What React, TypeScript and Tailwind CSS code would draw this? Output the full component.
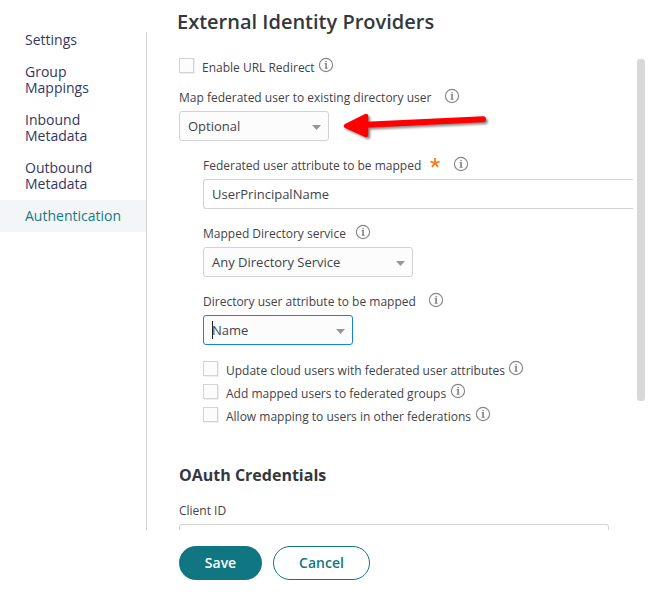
import React from "react";

function Info({ className = "" }: { className?: string }) {
  return (
    <svg className={`shrink-0 overflow-visible ${className}`} width="14" height="14" viewBox="0 0 14 14" fill="none">
      <circle cx="7" cy="7" r="6.6" stroke="#868686" strokeWidth="1.15" />
      <path d="M5.6 5.6H7.1V10.2M5.6 10.3H8.7" stroke="#8c8c8c" strokeWidth="1.1" />
      <path d="M7.1 5.1V10.6" stroke="#8c8c8c" strokeWidth="1.5" />
      <rect x="6.3" y="2.9" width="1.6" height="1.3" fill="#8c8c8c" />
    </svg>
  );
}

function Label({ text, required, gap }: { text: string; required?: boolean; gap: string }) {
  return (
    <div className="flex h-[27px] items-center whitespace-nowrap text-[12px]">
      <span>{text}</span>
      {required && (
        <svg className="-mt-1.5 ml-[9px] overflow-visible" width="10" height="10" viewBox="0 0 10 10" stroke="#fb7a1c" strokeWidth="1.8">
          <path d="M5 4.8V0M5 4.8L.4 3.6M5 4.8L9.6 3.6M5 4.8L2 9M5 4.8L8 9" />
        </svg>
      )}
      <Info className={`-mt-[3px] ${gap}`} />
    </div>
  );
}

function Select({ value, width, focused }: { value: string; width: string; focused?: boolean }) {
  return (
    <div
      className={`flex h-[30px] items-center justify-between rounded-[3px] border bg-[#fcfcfc] pl-2 pr-[7px] text-[13px] ${width} ${focused ? "border-[#1683d8]" : "border-[#d2d2d2]"}`}
    >
      <span className="relative pt-0.5">
        {focused && <span className="absolute top-0.5 left-0 h-[18px] w-px bg-[#222]" />}
        {value}
      </span>
      <svg className="mt-[3px]" width="9" height="5" viewBox="0 0 9 5">
        <path d="M0 0H9L4.5 5Z" fill="#969696" />
      </svg>
    </div>
  );
}

function Check({ text, gap = "ml-[4px]" }: { text: string; gap?: string }) {
  return (
    <div className="flex h-[23px] items-center whitespace-nowrap text-[12px]">
      <span className="-mt-[3px] mr-2 size-[15px] shrink-0 border border-[#d4d4d4] bg-[#fcfcfc] shadow-[1px_1px_0_#eeeeee]" />
      <span className="pt-0.5">{text}</span>
      <Info className={`-mt-[3px] ${gap}`} />
    </div>
  );
}

const navItems = ["Settings", "Group Mappings", "Inbound Metadata", "Outbound Metadata", "Authentication"];

export default function App() {
  return (
    <div className="flex h-[597px] w-[653px] overflow-hidden bg-white font-['Open_Sans',sans-serif] text-[#3f4349]">
      <nav className="mt-8 h-[498px] w-[147px] shrink-0 border-r border-[#d2d2d5] text-[14px] leading-4">
        {navItems.map((item) => (
          <a
            key={item}
            className={`block pl-[25px] pr-5 ${item === "Settings" ? "pb-2" : "py-2"} ${item === "Authentication" ? "bg-[#f4f5f7] text-[#147a85]" : "text-[#343663]"}`}
          >
            {item}
          </a>
        ))}
      </nav>

      <div className="flex min-w-0 flex-1 flex-col">
        <h1 className="ml-[30px] h-[54px] pt-2 text-[20px] font-semibold leading-7 text-[#34383d]">
          External Identity Providers
        </h1>
        <div className="flex h-[476px]">
          <main className="w-[486px] overflow-hidden pl-8">
            <div className="pt-px">
              <Check text="Enable URL Redirect" gap="ml-[4.5px]" />
            </div>
            <div className="mt-1.5">
              <Label text="Map federated user to existing directory user" gap="ml-[14px]" />
              <div className="flex h-[30px]">
                <Select value="Optional" width="w-[150px]" />
                <svg className="-mt-1 ml-3 overflow-visible" width="150" height="34" viewBox="0 0 150 34">
                  <g className="drop-shadow-[2px_2px_1px_rgba(0,0,0,0.45)]" fill="#ff0000" stroke="#ff0000" strokeLinejoin="round" strokeLinecap="round">
                    <path d="M5 19L25 9V28Z" strokeWidth="4.5" />
                    <path d="M25 17.8L142 12.2" strokeWidth="6" />
                  </g>
                </svg>
              </div>
            </div>
            <div className="ml-6 mt-[11px]">
              <Label text="Federated user attribute to be mapped" required gap="ml-[14px]" />
              <div className="flex h-[30px] items-center rounded-l-[3px] border border-r-0 border-[#d2d2d2] pl-2 pt-0.5 text-[13px]">
                UserPrincipalName
              </div>
              <div className="mt-[11px]">
                <Label text="Mapped Directory service" gap="ml-[10px]" />
                <Select value="Any Directory Service" width="w-[210px]" />
              </div>
              <div className="mt-[11px]">
                <Label text="Directory user attribute to be mapped" gap="ml-[13px]" />
                <Select value="Name" width="w-[150px]" focused />
              </div>
              <div className="mt-[13px]">
                <Check text="Update cloud users with federated user attributes" />
                <Check text="Add mapped users to federated groups" gap="ml-[4.5px]" />
                <Check text="Allow mapping to users in other federations" gap="ml-[4.5px]" />
              </div>
            </div>
            <h2 className="mt-9 text-[16px] font-bold leading-6 text-[#34383d]">OAuth Credentials</h2>
            <div className="mt-[14px] text-[12px] leading-[20px]">Client ID</div>
            <div className="mt-[3px] h-[30px] w-[430px] rounded-[3px] border border-[#d2d2d2]" />
          </main>
          <div className="ml-1 mt-[5px] h-[342px] w-2 rounded-[3px] bg-[#d8d8d8]" />
        </div>
        <footer className="flex gap-[11px] pl-8 pt-4 text-[14px] font-semibold">
          <button className="h-[34px] w-[83px] rounded-full bg-[#107782] pb-0.5 text-white">Save</button>
          <button className="h-[34px] w-[97px] rounded-full border border-[#107782] pb-0.5 text-[#107782]">Cancel</button>
        </footer>
      </div>
    </div>
  );
}
